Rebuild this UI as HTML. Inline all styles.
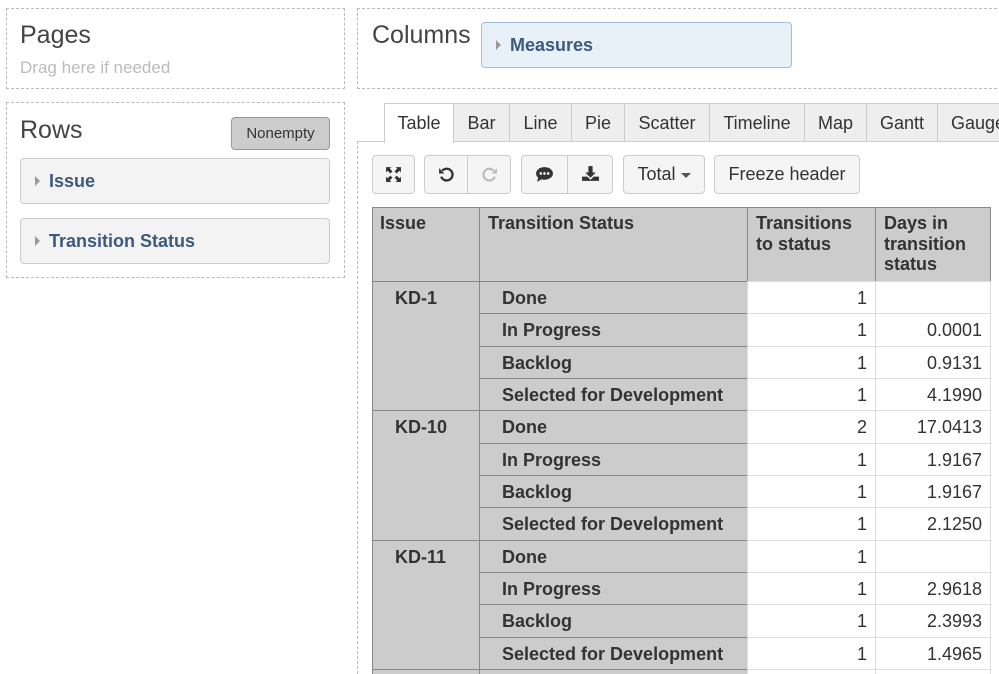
<!DOCTYPE html>
<html><head><meta charset="utf-8"><style>
*{box-sizing:border-box}
html{overflow:hidden;height:674px}
body{margin:0;width:999px;height:674px;overflow:hidden;background:#fff;font-family:"Liberation Sans",Arial,sans-serif;color:#333;position:relative}
.a{position:absolute}
.dash{border:1px dashed #bbb}
.h{font-size:25px;color:#444}
.pill{background:#f3f3f3;border:1px solid #ccc;border-radius:4px;font-weight:bold;color:#3b5a7e;font-size:18px;padding-left:28px;line-height:44px}
.pill:before{content:"";position:absolute;left:14px;top:17px;border-left:5px solid #999;border-top:5px solid transparent;border-bottom:5px solid transparent}
.tab{position:absolute;top:103px;height:38px;border:1px solid #ccc;border-bottom:none;background:#eee;font-size:18px;text-align:center;line-height:38px;color:#333}
.btn{position:absolute;top:155px;height:39px;border:1px solid #ccc;border-radius:4px;background:#f5f5f5;font-size:18px;text-align:center;line-height:37px}
.c{position:absolute;font-size:18px;font-weight:bold;line-height:32px;white-space:nowrap}
.g{position:absolute;background:#ccc;border:1px solid #888}
.w{position:absolute;border:1px solid #ddd;background:#fff}
.n{position:absolute;font-size:18px;line-height:32px;text-align:right}
</style></head><body>
<div class="a dash" style="left:6px;top:8px;width:339px;height:81px"></div>
<div class="a h" style="left:20px;top:21px">Pages</div>
<div class="a" style="left:20px;top:58px;font-size:17px;color:#bbb">Drag here if needed</div>
<div class="a dash" style="left:6px;top:102px;width:339px;height:176px"></div>
<div class="a h" style="left:20px;top:116px">Rows</div>
<div class="a" style="left:231px;top:117px;width:99px;height:33px;background:#ccc;border:1px solid #999;border-radius:4px;font-size:15px;text-align:center;line-height:31px">Nonempty</div>
<div class="a pill" style="left:20px;top:158px;width:310px;height:46px">Issue</div>
<div class="a pill" style="left:20px;top:218px;width:310px;height:46px">Transition Status</div>
<div class="a dash" style="left:357px;top:8px;width:660px;height:81px"></div>
<div class="a h" style="left:372px;top:21px">Columns</div>
<div class="a pill" style="left:481px;top:22px;width:311px;height:46px;background:#e8f0f8;border-color:#9ebfe0">Measures</div>
<div class="a" style="left:357px;top:141px;width:642px;border-top:1px solid #ccc"></div>
<div class="a" style="left:357px;top:141px;height:533px;border-left:1px dashed #bbb"></div>
<div class="tab" style="left:384px;width:70px;background:#fff;height:40px">Table</div>
<div class="tab" style="left:453px;width:57px">Bar</div>
<div class="tab" style="left:509px;width:63px">Line</div>
<div class="tab" style="left:571px;width:54px">Pie</div>
<div class="tab" style="left:624px;width:86px">Scatter</div>
<div class="tab" style="left:709px;width:96px">Timeline</div>
<div class="tab" style="left:804px;width:63px">Map</div>
<div class="tab" style="left:866px;width:72px">Gantt</div>
<div class="tab" style="left:937px;width:62px;text-align:left;padding-left:13px;overflow:hidden;border-right:none">Gauge</div>
<div class="btn" style="left:372px;width:43px"><svg width="17" height="17" viewBox="0 0 16 16" style="margin-top:10px"><path d="M1 1h5L4.5 2.5 7 5 5 7 2.5 4.5 1 6zM15 1v5l-1.5-1.5L11 7 9 5l2.5-2.5L10 1zM1 15v-5l1.5 1.5L5 9l2 2-2.5 2.5L6 15zM15 15h-5l1.5-1.5L9 11l2-2 2.5 2.5L15 10z" fill="#333"/></svg></div>
<div class="btn" style="left:424px;width:44px;border-radius:4px 0 0 4px"><svg width="17" height="17" viewBox="0 0 16 16" style="margin-top:10px"><path d="M4 4.5A5.5 5.5 0 1 1 3 10" fill="none" stroke="#333" stroke-width="2.2"/><path d="M1 2v5h5z" fill="#333"/></svg></div>
<div class="btn" style="left:467px;width:44px;border-radius:0 4px 4px 0"><svg width="17" height="17" viewBox="0 0 16 16" style="margin-top:10px"><path d="M12 4.5A5.5 5.5 0 1 0 13 10" fill="none" stroke="#bbb" stroke-width="2"/><path d="M15 2v5h-5z" fill="#bbb"/></svg></div>
<div class="btn" style="left:521px;width:47px;border-radius:4px 0 0 4px"><svg width="19" height="17" viewBox="0 0 18 16" style="margin-top:10px"><ellipse cx="9" cy="7" rx="8" ry="6" fill="#333"/><path d="M3 11l-1 4 5-3z" fill="#333"/><circle cx="5.5" cy="7" r="1.2" fill="#fff"/><circle cx="9" cy="7" r="1.2" fill="#fff"/><circle cx="12.5" cy="7" r="1.2" fill="#fff"/></svg></div>
<div class="btn" style="left:567px;width:46px;border-radius:0 4px 4px 0"><svg width="19" height="17" viewBox="0 0 18 16" style="margin-top:9px"><path d="M7 1h4v6h3l-5 5-5-5h3z" fill="#333"/><path d="M1 11h5l3 3 3-3h5v4H1z" fill="#333"/></svg></div>
<div class="btn" style="left:623px;width:82px">Total <span style="display:inline-block;border-top:5px solid #555;border-left:5px solid transparent;border-right:5px solid transparent;vertical-align:middle"></span></div>
<div class="btn" style="left:714px;width:146px">Freeze header</div>

<div class="g" style="left:372px;top:207px;width:108px;height:75px"></div>
<div class="g" style="left:479px;top:207px;width:269px;height:75px"></div>
<div class="g" style="left:747px;top:207px;width:129px;height:75px"></div>
<div class="g" style="left:875px;top:207px;width:116px;height:75px"></div>
<div class="c" style="left:380px;top:213px;line-height:20.5px">Issue</div>
<div class="c" style="left:488px;top:213px;line-height:20.5px">Transition Status</div>
<div class="c" style="left:756px;top:213px;line-height:20.5px">Transitions<br>to status</div>
<div class="c" style="left:884px;top:213px;line-height:20.5px">Days in<br>transition<br>status</div>

<div id="t"></div>
<script>
(function(){
var names=["Done","In Progress","Backlog","Selected for Development"];
var issues=["KD-1","KD-10","KD-11",""];
var a=[["1",""],["1","0.0001"],["1","0.9131"],["1","4.1990"],["2","17.0413"],["1","1.9167"],["1","1.9167"],["1","2.1250"],["1",""],["1","2.9618"],["1","2.3993"],["1","1.4965"],["",""]];
var h="",p=32.33;
for(var g=0;g<4;g++){var y0=281+g*4*p;var hh=g<3?4*p+1:p+1;
h+='<div class="g" style="left:372px;top:'+y0+'px;width:108px;height:'+hh+'px"></div>';
h+='<div class="c" style="left:395px;top:'+(y0+1)+'px">'+issues[g]+'</div>';}
for(var i=0;i<13;i++){var t=281+i*p;
h+='<div class="g" style="left:479px;top:'+t+'px;width:269px;height:'+(p+1)+'px"></div>';
h+='<div class="c" style="left:502px;top:'+(t+1)+'px">'+(i<12?names[i%4]:"")+'</div>';
h+='<div class="w" style="left:747px;top:'+t+'px;width:129px;height:'+(p+1)+'px"></div>';
h+='<div class="w" style="left:875px;top:'+t+'px;width:116px;height:'+(p+1)+'px"></div>';
h+='<div class="n" style="left:747px;width:120px;top:'+(t+1)+'px">'+a[i][0]+'</div>';
h+='<div class="n" style="left:875px;width:107px;top:'+(t+1)+'px">'+a[i][1]+'</div>';}
document.getElementById("t").innerHTML=h;
})();
</script>
</body></html>
